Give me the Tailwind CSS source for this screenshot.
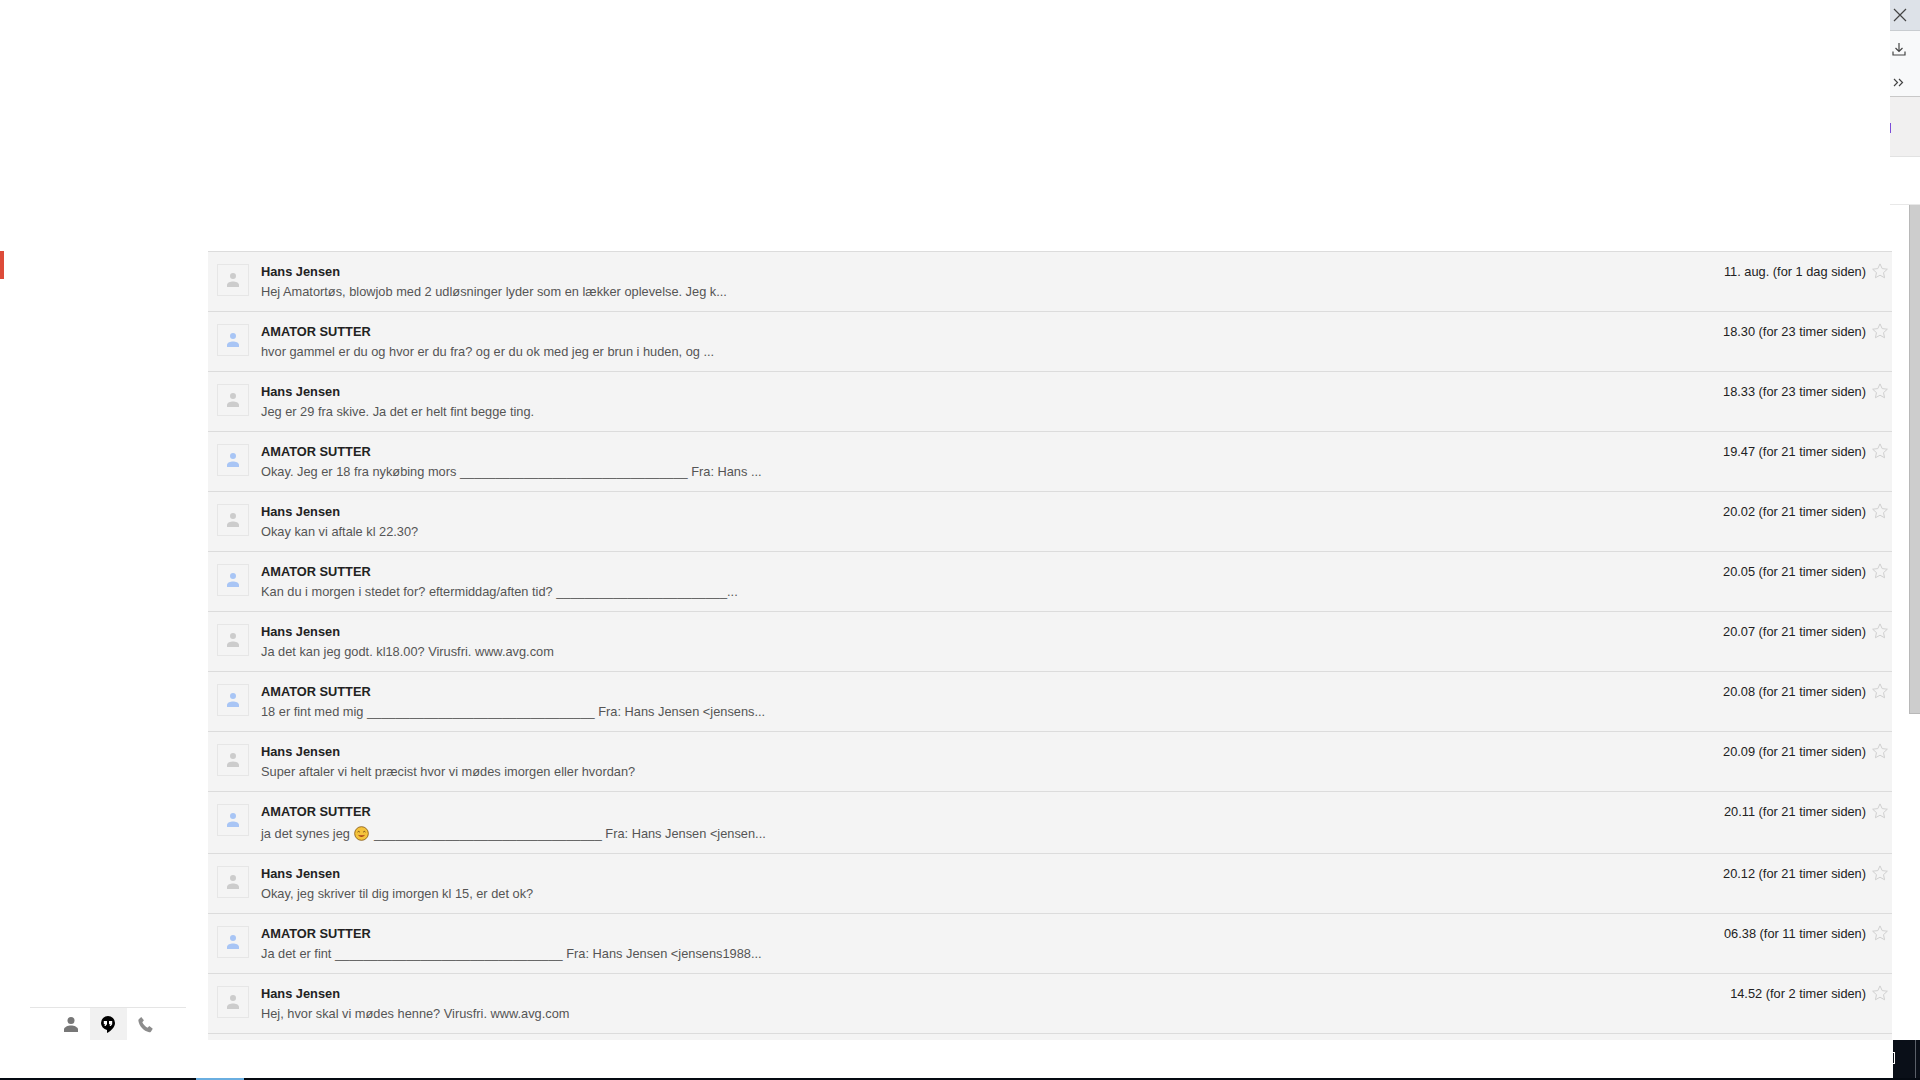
<!DOCTYPE html>
<html><head><meta charset="utf-8"><script src="https://cdn.jsdelivr.net/npm/@tailwindcss/browser@4"></script></head>
<body class="bg-white">
<div class="relative h-[1080px] w-[1920px] overflow-hidden bg-white font-['Liberation_Sans',Arial,sans-serif]">
<div class="flex h-[1078px]">
  <aside class="relative w-[208px] shrink-0">
    <div class="absolute left-0 top-[251px] h-[28px] w-[4px] bg-[#dd4b39]"></div>
    <div class="absolute left-[30px] top-[1007px] flex h-[33px] w-[156px] justify-center border-t border-[#e5e5e5]">
      <div class="flex h-[32px] w-[37px] items-center justify-center"><svg width="14" height="15" viewBox="0 0 14 15" fill="#777"><circle cx="7" cy="3.500" r="3.500"/><path d="M0 15v-2.500C0 10 4 8.500 7 8.500s7 1.500 7 4V15z"/></svg></div>
      <div class="flex h-[32px] w-[37px] items-center justify-center bg-[#f1f1f1]"><svg width="14" height="17" viewBox="0 0 14 17"><path d="M7 0a7 7 0 0 0-7 7 7 7 0 0 0 6 6.900V17C10 15 14 11 14 7a7 7 0 0 0-7-7z" fill="#000"/><path d="M2.800 5h3.200v3.200L4.600 10H3.300l1-1.800H2.800zM8 5h3.200v3.200L9.800 10H8.500l1-1.800H8z" fill="#fff"/></svg></div>
      <div class="flex h-[32px] w-[37px] items-center justify-center"><svg width="19" height="19" viewBox="0 0 24 24" fill="#8c8c8c"><path d="M6.600 2.500 10 6.500 8 9.200c.9 2.400 3.900 5.700 6.500 6.800l2.400-2 4.300 3.400-2.400 3.600c-.6.700-1.300 1-2.200.8C9.500 19.800 4.200 14.500 3 7.200c-.1-.9.100-1.600.8-2.200z"/></svg></div>
    </div>
  </aside>
  <main class="w-[1684px] shrink-0 pt-[251px]">
    <div class="h-[789px] overflow-hidden border-t border-[#dcdcdc] bg-[#f4f4f4] text-[12.8px] leading-[20px]">

      <div class="flex h-[60px] border-b border-[#dcdcdc] pl-[9px] pr-[3px]">
        <div class="mt-[12px] flex h-[32px] w-[32px] items-center justify-center border border-[#e6e6e6]"><svg width="12" height="14" viewBox="0 0 12 14" fill="#cccccc"><circle cx="6" cy="3" r="3"/><path d="M0 14v-2C0 9.500 3.500 8.500 6 8.500s6 1 6 3.500v2z"/></svg></div>
        <div class="ml-[12px] min-w-0 flex-1 pt-[10px] text-[#555]"><div class="font-bold text-[#222]">Hans Jensen</div><div>Hej Amatortøs, blowjob med 2 udløsninger lyder som en lækker oplevelse. Jeg k...</div></div>
        <div class="pt-[10px] text-[#222]">11. aug. (for 1 dag siden)</div>
        <div class="ml-[5px] pt-[10px]"><svg width="18" height="18" viewBox="0 0 24 24" fill="none" stroke="#cfcfcf" stroke-width="1.300"><path d="M12 2.500l2.900 6.300 6.900.8-5.100 4.600 1.400 6.800-6.100-3.400-6.100 3.400 1.400-6.800-5.100-4.600 6.900-.8z"/></svg></div>
      </div>

      <div class="flex h-[60px] border-b border-[#dcdcdc] pl-[9px] pr-[3px]">
        <div class="mt-[12px] flex h-[32px] w-[32px] items-center justify-center border border-[#e6e6e6]"><svg width="12" height="14" viewBox="0 0 12 14" fill="#a8c5f5"><circle cx="6" cy="3" r="3"/><path d="M0 14v-2C0 9.500 3.500 8.500 6 8.500s6 1 6 3.500v2z"/></svg></div>
        <div class="ml-[12px] min-w-0 flex-1 pt-[10px] text-[#555]"><div class="font-bold text-[#222]">AMATOR SUTTER</div><div>hvor gammel er du og hvor er du fra? og er du ok med jeg er brun i huden, og ...</div></div>
        <div class="pt-[10px] text-[#222]">18.30 (for 23 timer siden)</div>
        <div class="ml-[5px] pt-[10px]"><svg width="18" height="18" viewBox="0 0 24 24" fill="none" stroke="#cfcfcf" stroke-width="1.300"><path d="M12 2.500l2.900 6.300 6.900.8-5.100 4.600 1.400 6.800-6.100-3.400-6.100 3.400 1.400-6.800-5.100-4.600 6.900-.8z"/></svg></div>
      </div>

      <div class="flex h-[60px] border-b border-[#dcdcdc] pl-[9px] pr-[3px]">
        <div class="mt-[12px] flex h-[32px] w-[32px] items-center justify-center border border-[#e6e6e6]"><svg width="12" height="14" viewBox="0 0 12 14" fill="#cccccc"><circle cx="6" cy="3" r="3"/><path d="M0 14v-2C0 9.500 3.500 8.500 6 8.500s6 1 6 3.500v2z"/></svg></div>
        <div class="ml-[12px] min-w-0 flex-1 pt-[10px] text-[#555]"><div class="font-bold text-[#222]">Hans Jensen</div><div>Jeg er 29 fra skive. Ja det er helt fint begge ting.</div></div>
        <div class="pt-[10px] text-[#222]">18.33 (for 23 timer siden)</div>
        <div class="ml-[5px] pt-[10px]"><svg width="18" height="18" viewBox="0 0 24 24" fill="none" stroke="#cfcfcf" stroke-width="1.300"><path d="M12 2.500l2.900 6.300 6.900.8-5.100 4.600 1.400 6.800-6.100-3.400-6.100 3.400 1.400-6.800-5.100-4.600 6.900-.8z"/></svg></div>
      </div>

      <div class="flex h-[60px] border-b border-[#dcdcdc] pl-[9px] pr-[3px]">
        <div class="mt-[12px] flex h-[32px] w-[32px] items-center justify-center border border-[#e6e6e6]"><svg width="12" height="14" viewBox="0 0 12 14" fill="#a8c5f5"><circle cx="6" cy="3" r="3"/><path d="M0 14v-2C0 9.500 3.500 8.500 6 8.500s6 1 6 3.500v2z"/></svg></div>
        <div class="ml-[12px] min-w-0 flex-1 pt-[10px] text-[#555]"><div class="font-bold text-[#222]">AMATOR SUTTER</div><div>Okay. Jeg er 18 fra nykøbing mors ________________________________ Fra: Hans ...</div></div>
        <div class="pt-[10px] text-[#222]">19.47 (for 21 timer siden)</div>
        <div class="ml-[5px] pt-[10px]"><svg width="18" height="18" viewBox="0 0 24 24" fill="none" stroke="#cfcfcf" stroke-width="1.300"><path d="M12 2.500l2.900 6.300 6.900.8-5.100 4.600 1.400 6.800-6.100-3.400-6.100 3.400 1.400-6.800-5.100-4.600 6.900-.8z"/></svg></div>
      </div>

      <div class="flex h-[60px] border-b border-[#dcdcdc] pl-[9px] pr-[3px]">
        <div class="mt-[12px] flex h-[32px] w-[32px] items-center justify-center border border-[#e6e6e6]"><svg width="12" height="14" viewBox="0 0 12 14" fill="#cccccc"><circle cx="6" cy="3" r="3"/><path d="M0 14v-2C0 9.500 3.500 8.500 6 8.500s6 1 6 3.500v2z"/></svg></div>
        <div class="ml-[12px] min-w-0 flex-1 pt-[10px] text-[#555]"><div class="font-bold text-[#222]">Hans Jensen</div><div>Okay kan vi aftale kl 22.30?</div></div>
        <div class="pt-[10px] text-[#222]">20.02 (for 21 timer siden)</div>
        <div class="ml-[5px] pt-[10px]"><svg width="18" height="18" viewBox="0 0 24 24" fill="none" stroke="#cfcfcf" stroke-width="1.300"><path d="M12 2.500l2.900 6.300 6.900.8-5.100 4.600 1.400 6.800-6.100-3.400-6.100 3.400 1.400-6.800-5.100-4.600 6.900-.8z"/></svg></div>
      </div>

      <div class="flex h-[60px] border-b border-[#dcdcdc] pl-[9px] pr-[3px]">
        <div class="mt-[12px] flex h-[32px] w-[32px] items-center justify-center border border-[#e6e6e6]"><svg width="12" height="14" viewBox="0 0 12 14" fill="#a8c5f5"><circle cx="6" cy="3" r="3"/><path d="M0 14v-2C0 9.500 3.500 8.500 6 8.500s6 1 6 3.500v2z"/></svg></div>
        <div class="ml-[12px] min-w-0 flex-1 pt-[10px] text-[#555]"><div class="font-bold text-[#222]">AMATOR SUTTER</div><div>Kan du i morgen i stedet for? eftermiddag/aften tid? ________________________...</div></div>
        <div class="pt-[10px] text-[#222]">20.05 (for 21 timer siden)</div>
        <div class="ml-[5px] pt-[10px]"><svg width="18" height="18" viewBox="0 0 24 24" fill="none" stroke="#cfcfcf" stroke-width="1.300"><path d="M12 2.500l2.900 6.300 6.900.8-5.100 4.600 1.400 6.800-6.100-3.400-6.100 3.400 1.400-6.800-5.100-4.600 6.900-.8z"/></svg></div>
      </div>

      <div class="flex h-[60px] border-b border-[#dcdcdc] pl-[9px] pr-[3px]">
        <div class="mt-[12px] flex h-[32px] w-[32px] items-center justify-center border border-[#e6e6e6]"><svg width="12" height="14" viewBox="0 0 12 14" fill="#cccccc"><circle cx="6" cy="3" r="3"/><path d="M0 14v-2C0 9.500 3.500 8.500 6 8.500s6 1 6 3.500v2z"/></svg></div>
        <div class="ml-[12px] min-w-0 flex-1 pt-[10px] text-[#555]"><div class="font-bold text-[#222]">Hans Jensen</div><div>Ja det kan jeg godt. kl18.00? Virusfri. www.avg.com</div></div>
        <div class="pt-[10px] text-[#222]">20.07 (for 21 timer siden)</div>
        <div class="ml-[5px] pt-[10px]"><svg width="18" height="18" viewBox="0 0 24 24" fill="none" stroke="#cfcfcf" stroke-width="1.300"><path d="M12 2.500l2.900 6.300 6.900.8-5.100 4.600 1.400 6.800-6.100-3.400-6.100 3.400 1.400-6.800-5.100-4.600 6.900-.8z"/></svg></div>
      </div>

      <div class="flex h-[60px] border-b border-[#dcdcdc] pl-[9px] pr-[3px]">
        <div class="mt-[12px] flex h-[32px] w-[32px] items-center justify-center border border-[#e6e6e6]"><svg width="12" height="14" viewBox="0 0 12 14" fill="#a8c5f5"><circle cx="6" cy="3" r="3"/><path d="M0 14v-2C0 9.500 3.500 8.500 6 8.500s6 1 6 3.500v2z"/></svg></div>
        <div class="ml-[12px] min-w-0 flex-1 pt-[10px] text-[#555]"><div class="font-bold text-[#222]">AMATOR SUTTER</div><div>18 er fint med mig ________________________________ Fra: Hans Jensen &lt;jensens...</div></div>
        <div class="pt-[10px] text-[#222]">20.08 (for 21 timer siden)</div>
        <div class="ml-[5px] pt-[10px]"><svg width="18" height="18" viewBox="0 0 24 24" fill="none" stroke="#cfcfcf" stroke-width="1.300"><path d="M12 2.500l2.900 6.300 6.900.8-5.100 4.600 1.400 6.800-6.100-3.400-6.100 3.400 1.400-6.800-5.100-4.600 6.900-.8z"/></svg></div>
      </div>

      <div class="flex h-[60px] border-b border-[#dcdcdc] pl-[9px] pr-[3px]">
        <div class="mt-[12px] flex h-[32px] w-[32px] items-center justify-center border border-[#e6e6e6]"><svg width="12" height="14" viewBox="0 0 12 14" fill="#cccccc"><circle cx="6" cy="3" r="3"/><path d="M0 14v-2C0 9.500 3.500 8.500 6 8.500s6 1 6 3.500v2z"/></svg></div>
        <div class="ml-[12px] min-w-0 flex-1 pt-[10px] text-[#555]"><div class="font-bold text-[#222]">Hans Jensen</div><div>Super aftaler vi helt præcist hvor vi mødes imorgen eller hvordan?</div></div>
        <div class="pt-[10px] text-[#222]">20.09 (for 21 timer siden)</div>
        <div class="ml-[5px] pt-[10px]"><svg width="18" height="18" viewBox="0 0 24 24" fill="none" stroke="#cfcfcf" stroke-width="1.300"><path d="M12 2.500l2.900 6.300 6.900.8-5.100 4.600 1.400 6.800-6.100-3.400-6.100 3.400 1.400-6.800-5.100-4.600 6.900-.8z"/></svg></div>
      </div>

      <div class="flex h-[62px] border-b border-[#dcdcdc] pl-[9px] pr-[3px]">
        <div class="mt-[12px] flex h-[32px] w-[32px] items-center justify-center border border-[#e6e6e6]"><svg width="12" height="14" viewBox="0 0 12 14" fill="#a8c5f5"><circle cx="6" cy="3" r="3"/><path d="M0 14v-2C0 9.500 3.500 8.500 6 8.500s6 1 6 3.500v2z"/></svg></div>
        <div class="ml-[12px] min-w-0 flex-1 pt-[10px] text-[#555]"><div class="font-bold text-[#222]">AMATOR SUTTER</div><div class="mt-[1px] flex h-[22px] items-center whitespace-pre">ja det synes jeg <svg class="mx-[1px] -mt-[1px] shrink-0" width="15" height="15" viewBox="0 0 16 16"><circle cx="8" cy="8" r="7.300" fill="#f5c33b" stroke="#8a5a10" stroke-width=".9"/><path d="M3.800 6.500q1.200-1.600 2.400 0M9.800 6.500q1.200-1.600 2.400 0" fill="none" stroke="#6b4510" stroke-width="1"/><path d="M4 9.300q4 5 8 0q-4 1.200-8 0z" fill="#a8431a"/></svg> ________________________________ Fra: Hans Jensen &lt;jensen...</div></div>
        <div class="pt-[10px] text-[#222]">20.11 (for 21 timer siden)</div>
        <div class="ml-[5px] pt-[10px]"><svg width="18" height="18" viewBox="0 0 24 24" fill="none" stroke="#cfcfcf" stroke-width="1.300"><path d="M12 2.500l2.900 6.300 6.900.8-5.100 4.600 1.400 6.800-6.100-3.400-6.100 3.400 1.400-6.800-5.100-4.600 6.900-.8z"/></svg></div>
      </div>

      <div class="flex h-[60px] border-b border-[#dcdcdc] pl-[9px] pr-[3px]">
        <div class="mt-[12px] flex h-[32px] w-[32px] items-center justify-center border border-[#e6e6e6]"><svg width="12" height="14" viewBox="0 0 12 14" fill="#cccccc"><circle cx="6" cy="3" r="3"/><path d="M0 14v-2C0 9.500 3.500 8.500 6 8.500s6 1 6 3.500v2z"/></svg></div>
        <div class="ml-[12px] min-w-0 flex-1 pt-[10px] text-[#555]"><div class="font-bold text-[#222]">Hans Jensen</div><div>Okay, jeg skriver til dig imorgen kl 15, er det ok?</div></div>
        <div class="pt-[10px] text-[#222]">20.12 (for 21 timer siden)</div>
        <div class="ml-[5px] pt-[10px]"><svg width="18" height="18" viewBox="0 0 24 24" fill="none" stroke="#cfcfcf" stroke-width="1.300"><path d="M12 2.500l2.900 6.300 6.900.8-5.100 4.600 1.400 6.800-6.100-3.400-6.100 3.400 1.400-6.800-5.100-4.600 6.900-.8z"/></svg></div>
      </div>

      <div class="flex h-[60px] border-b border-[#dcdcdc] pl-[9px] pr-[3px]">
        <div class="mt-[12px] flex h-[32px] w-[32px] items-center justify-center border border-[#e6e6e6]"><svg width="12" height="14" viewBox="0 0 12 14" fill="#a8c5f5"><circle cx="6" cy="3" r="3"/><path d="M0 14v-2C0 9.500 3.500 8.500 6 8.500s6 1 6 3.500v2z"/></svg></div>
        <div class="ml-[12px] min-w-0 flex-1 pt-[10px] text-[#555]"><div class="font-bold text-[#222]">AMATOR SUTTER</div><div>Ja det er fint ________________________________ Fra: Hans Jensen &lt;jensens1988...</div></div>
        <div class="pt-[10px] text-[#222]">06.38 (for 11 timer siden)</div>
        <div class="ml-[5px] pt-[10px]"><svg width="18" height="18" viewBox="0 0 24 24" fill="none" stroke="#cfcfcf" stroke-width="1.300"><path d="M12 2.500l2.900 6.300 6.900.8-5.100 4.600 1.400 6.800-6.100-3.400-6.100 3.400 1.400-6.800-5.100-4.600 6.900-.8z"/></svg></div>
      </div>

      <div class="flex h-[60px] border-b border-[#dcdcdc] pl-[9px] pr-[3px]">
        <div class="mt-[12px] flex h-[32px] w-[32px] items-center justify-center border border-[#e6e6e6]"><svg width="12" height="14" viewBox="0 0 12 14" fill="#cccccc"><circle cx="6" cy="3" r="3"/><path d="M0 14v-2C0 9.500 3.500 8.500 6 8.500s6 1 6 3.500v2z"/></svg></div>
        <div class="ml-[12px] min-w-0 flex-1 pt-[10px] text-[#555]"><div class="font-bold text-[#222]">Hans Jensen</div><div>Hej, hvor skal vi mødes henne? Virusfri. www.avg.com</div></div>
        <div class="pt-[10px] text-[#222]">14.52 (for 2 timer siden)</div>
        <div class="ml-[5px] pt-[10px]"><svg width="18" height="18" viewBox="0 0 24 24" fill="none" stroke="#cfcfcf" stroke-width="1.300"><path d="M12 2.500l2.900 6.300 6.900.8-5.100 4.600 1.400 6.800-6.100-3.400-6.100 3.400 1.400-6.800-5.100-4.600 6.900-.8z"/></svg></div>
      </div>

    </div>
  </main>
  <div class="flex flex-1 justify-end pt-[205px]">
    <div class="h-[509px] w-[11px] border-b border-l border-[#b8b8b8] bg-[#cdcdcd]"></div>
  </div>
</div>

<div class="absolute right-0 top-0 w-[30px]">
  <div class="flex h-[31px] items-center justify-center border-b border-[#c8ccd0] bg-[#dde2e8] pr-[10px]"><svg width="14" height="14" viewBox="0 0 14 14" stroke="#444" stroke-width="1.200"><path d="M1 1l12 12M13 1L1 13"/></svg></div>
  <div class="flex h-[33px] items-center justify-center bg-[#f8f9fa] pr-[13px] pt-[3px]"><svg width="14" height="14" viewBox="0 0 14 14" fill="none" stroke="#444" stroke-width="1.200"><path d="M7 1v8M3.500 6L7 9.500 10.500 6M1 9.500V13h12V9.500"/></svg></div>
  <div class="flex h-[33px] items-center justify-center border-b border-[#c8c8c8] bg-[#f8f9fa] pr-[13px] pt-[4px]"><svg width="11" height="9" viewBox="0 0 11 9" fill="none" stroke="#444" stroke-width="1.200"><path d="M1 1l3.500 3.500L1 8M6 1l3.500 3.500L6 8"/></svg></div>
  <div class="relative h-[60px] border-b border-[#e2e2e2] bg-[#f1f0f0]"><div class="absolute left-0 top-[26px] h-[10px] w-[1px] bg-[#7c4dd8]"></div></div>
  <div class="mt-[47px] h-[1px] bg-[#e8e8e8]"></div>
</div>

<div class="absolute bottom-0 right-0 flex h-[40px] w-[27px] bg-[#0a0f18]">
  <div class="mt-[12px] h-[12px] w-[2px] border-y border-r border-white"></div>
  <div class="ml-[20px] h-full w-[1px] bg-[#5a5f68]"></div>
</div>
<div class="absolute bottom-0 left-0 h-[2px] w-full bg-[#050a12]"><div class="ml-[196px] h-full w-[48px] bg-[#6aaee0]"></div></div>
</div>
</body></html>
